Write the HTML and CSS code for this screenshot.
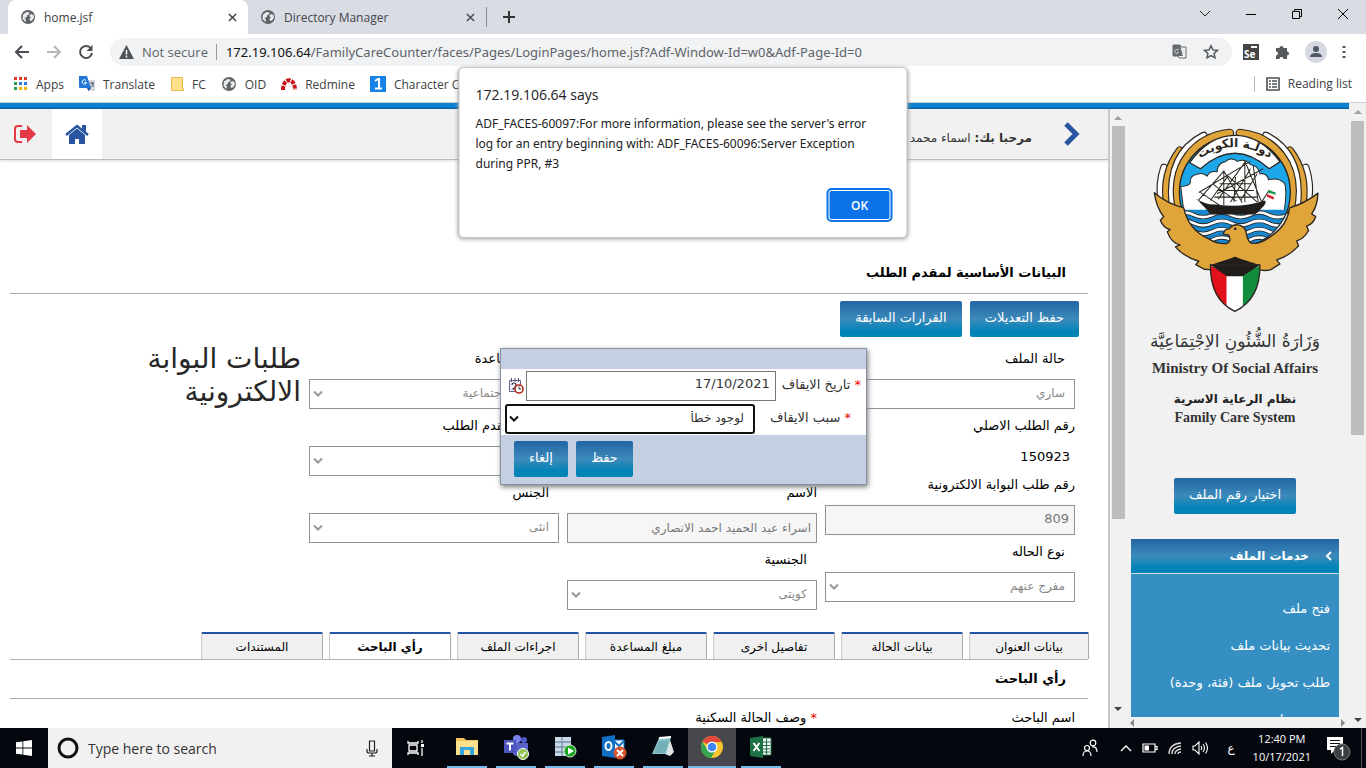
FILE: index.html
```html
<!DOCTYPE html>
<html lang="en">
<head>
<meta charset="utf-8">
<title>home.jsf</title>
<link rel="stylesheet" href="styles.css">
</head>
<body>
<svg class="defs" aria-hidden="true">
  <symbol id="globe" viewBox="0 0 16 16"><circle cx="8" cy="8" r="7" fill="#5f6368"/><path d="M3 5.500 6.500 3l3 .6L9 5.500 6.800 6.500 7 8 4.500 9 6 10.500 5.500 13 2.500 10ZM11 5l2.500 1 .5 2.500-2 3-2 .5-.5-2.500 1.500-1-2-1.500Z" fill="#e8eaed"/></symbol>
  <symbol id="chev" viewBox="0 0 10 8"><path d="m1 1.500 4 4 4-4" fill="none" stroke="currentColor" stroke-width="2"/></symbol>
  <symbol id="cross" viewBox="0 0 10 10"><path d="m1 1 8 8M9 1 1 9" stroke="currentColor" stroke-width="1.600"/></symbol>
</svg>

<header class="browser">
  <div class="tabstrip">
    <div class="btab active"><svg width="16" height="16"><use href="#globe"/></svg><span>home.jsf</span><button class="plain" aria-label="Close tab"><svg width="9" height="9"><use href="#cross"/></svg></button></div>
    <div class="btab"><svg width="16" height="16"><use href="#globe"/></svg><span>Directory Manager</span><button class="plain" aria-label="Close tab"><svg width="9" height="9"><use href="#cross"/></svg></button></div>
    <button class="plain newtab" aria-label="New tab"><svg width="12" height="12" viewBox="0 0 12 12"><path d="M6 0v12M0 6h12" stroke="#333" stroke-width="2"/></svg></button>
    <div class="winctl">
      <button class="plain" aria-label="Search tabs"><svg width="12" height="12" viewBox="0 0 12 12"><path d="m1 3 5 5 5-5" fill="none" stroke="#222"/></svg></button>
      <button class="plain" aria-label="Minimize"><svg width="12" height="12" viewBox="0 0 12 12"><path d="M1 6.500h10" stroke="#000"/></svg></button>
      <button class="plain" aria-label="Restore"><svg width="12" height="12" viewBox="0 0 12 12"><path d="M3.500 3.500v-2h7v7h-2M1.500 3.500h7v7h-7z" fill="none" stroke="#000"/></svg></button>
      <button class="plain" aria-label="Close"><svg width="12" height="12" viewBox="0 0 12 12"><path d="m1 1 10 10M11 1 1 11" stroke="#000"/></svg></button>
    </div>
  </div>
  <div class="toolbar">
    <button class="plain nav" aria-label="Back"><svg width="16" height="16" viewBox="0 0 16 16"><path d="M15 8H2M8 2 2 8l6 6" fill="none" stroke="#4a4d51" stroke-width="2"/></svg></button>
    <button class="plain nav" aria-label="Forward"><svg width="16" height="16" viewBox="0 0 16 16"><path d="M1 8h13M8 2l6 6-6 6" fill="none" stroke="#b4b6b9" stroke-width="2"/></svg></button>
    <button class="plain nav" aria-label="Reload"><svg width="16" height="16" viewBox="0 0 16 16"><path d="M13 4.500A6 6 0 1 0 14 9" fill="none" stroke="#4a4d51" stroke-width="2"/><path d="M14.500 1v6h-6z" fill="#4a4d51"/></svg></button>
    <div class="omnibox">
      <svg width="15" height="14" viewBox="0 0 15 14"><path d="M7.500 0 15 14H0z" fill="#4f5256"/><path d="M7.500 5v4.500M7.500 10.500v2" stroke="#fff" stroke-width="1.500"/></svg>
      <span class="secure">Not secure</span>
      <div class="url"><b>172.19.106.64</b>/FamilyCareCounter/faces/Pages/LoginPages/home.jsf?Adf-Window-Id=w0&amp;Adf-Page-Id=0</div>
      <svg width="15" height="15" viewBox="0 0 15 15"><path d="M1 1h7l1 2h5v11H7l-1-2H1z" fill="#f5f5f5" stroke="#66696e"/><path d="M1 1h7l3 11H1z" fill="#66696e"/><path d="M7 5.500H5a2 2 0 1 0 1.500 3V8H5M9 6h4M11 6c0 2 1 4 2.500 5M12.500 6c0 2-1 3-2.500 5" fill="none" stroke="#ddd" stroke-width=".8"/></svg>
      <svg width="16" height="16" viewBox="0 0 16 16"><path d="m8 1.800 1.900 4.100 4.500.5-3.300 3 .9 4.500L8 11.700l-4 2.200.9-4.500-3.300-3 4.500-.5z" fill="none" stroke="#55585c" stroke-width="1.500"/></svg>
    </div>
    <svg class="ext" width="16" height="16" viewBox="0 0 16 16"><path d="M0 0h16v16H0z" fill="#454545"/><path d="M8 2h6v2H8z" fill="#fff"/><text x="1" y="14" class="se">Se</text></svg>
    <svg class="ext" width="16" height="16" viewBox="0 0 16 16"><path d="M2 4h3.500a2 2 0 1 1 4 0H13v3.500a2 2 0 1 1 0 4V15H9.500a2 2 0 1 0-4 0H2v-3.500a2 2 0 1 0 0-4z" fill="#55585c"/></svg>
    <svg class="ext" width="22" height="22" viewBox="0 0 22 22"><circle cx="11" cy="11" r="11" fill="#d5d9df"/><circle cx="11" cy="8" r="3" fill="#4e5869"/><path d="M5 16q0-4 6-4t6 4z" fill="#4e5869"/></svg>
    <button class="plain" aria-label="Menu"><svg width="4" height="14" viewBox="0 0 4 14"><path d="M.5 1h3v2h-3zM.5 6h3v2h-3zM.5 11h3v2h-3z" fill="#505357"/></svg></button>
  </div>
  <nav class="bookmarks">
    <a href="#"><svg width="14" height="14" viewBox="0 0 14 14"><path d="M0 0h3v3H0zM5 0h3v3H5zM10 0h3v3h-3z" fill="#e33b2e"/><path d="M0 5h3v3H0zM0 10h3v3H0z" fill="#2b9a4a"/><path d="M5 5h3v3H5zM10 5h3v3h-3z" fill="#2b7de1"/><path d="M5 10h3v3H5zM10 10h3v3h-3z" fill="#f4b400"/></svg>Apps</a>
    <a href="#"><svg width="16" height="16" viewBox="0 0 16 16"><path d="M6 4h10v11H9z" fill="#d5d8dc"/><path d="M0 0h8l4 12H1q-1 0-1-1z" fill="#2478d8"/><path d="M8 12h4l-2.500 3z" fill="#174ea6"/><path d="M7 4.500a2.200 2.200 0 1 0 .5 2H5.500" fill="none" stroke="#fff"/><path d="M11 7h4M13 6v1c0 2 1 3 2 4m-.5-4c0 2-1 3-2.500 4" fill="none" stroke="#667"/></svg>Translate</a>
    <a href="#"><svg width="14" height="14" viewBox="0 0 14 14"><path d="M1.500.5h11V11l1 .5v2h-12z" fill="#ffe08a" stroke="#e8b84a"/></svg>FC</a>
    <a href="#"><svg width="16" height="16"><use href="#globe"/></svg>OID</a>
    <a href="#"><svg width="16" height="14" viewBox="0 0 16 14"><path d="M2 13C2 0 14 0 14 13" fill="none" stroke="#c8151b" stroke-width="4" stroke-dasharray="4 1"/></svg>Redmine</a>
    <a href="#"><svg width="16" height="16" viewBox="0 0 16 16"><path d="M0 0h16v16H0z" fill="#1683e8"/><path d="m5 5 3-2h1v9M5 12.500h7" fill="none" stroke="#fff" stroke-width="2"/></svg>Character Counter</a>
    <button class="plain reading"><svg width="14" height="14" viewBox="0 0 14 14"><path d="M1 1h12v12H1z" fill="none" stroke="#4b5054" stroke-width="1.600"/><path d="M3 4h2M3 7h2M3 10h2M6 4h5M6 7h5M6 10h5" stroke="#4b5054" stroke-width="1.400"/></svg>Reading list</button>
  </nav>
</header>

<div class="page" dir="rtl" lang="ar">
  <div class="vbar outer" aria-hidden="true"><i class="up"></i><i class="thumb"></i><i class="down"></i></div>
  <div class="app">
    <div class="topline"></div>
    <div class="cols">
      <aside class="side">
        <div class="sidecontent">
          <svg class="emblem" viewBox="165 80 500 560" role="img" aria-label="شعار دولة الكويت">
            <defs>
              <g id="wing" stroke-linecap="round" fill="none">
                <path d="M193 300Q185 250 201 202" stroke="#2b2722" stroke-width="24"/><path d="M193 300Q185 250 201 202" stroke="#fff" stroke-width="17"/>
                <path d="M210 310Q195 220 248 150" stroke="#2b2722" stroke-width="24"/><path d="M210 310Q195 220 248 150" stroke="#dfa43a" stroke-width="17"/>
                <path d="M226 310Q212 160 320 106" stroke="#2b2722" stroke-width="24"/><path d="M226 310Q212 160 320 106" stroke="#fff" stroke-width="17"/>
                <path d="M247 330C215 190 300 108 398 98" stroke="#2b2722" stroke-width="26"/><path d="M247 330C215 190 300 108 398 98" stroke="#dfa43a" stroke-width="19"/>
              </g>
              <path id="band" d="M300 180Q413 100 526 180"/>
              <clipPath id="disc"><circle cx="413" cy="275" r="164"/></clipPath>
            </defs>
            <use href="#wing"/><use href="#wing" transform="matrix(-1 0 0 1 826 0)"/>
            <circle cx="413" cy="275" r="166" fill="#1ea7e8" stroke="#2b2722" stroke-width="4"/>
            <path d="M251 258q25 0 29-12-2-22 20-24 17-8 30 5 8-17 30-13 0-26 26-31 15-14 35 0 22-10 38 9 25 4 29 28 22-3 26 18 30-8 48 11 8 20-1 82H260z" fill="#fff" stroke="#2b2722" stroke-width="3"/>
            <g clip-path="url(#disc)">
              <path d="M240 328H590V445H240z" fill="#1687cf"/>
              <g fill="none">
                <g stroke="#2b2722" stroke-width="13"><path d="M240 345q22-16 50-2t56 0 56 0 56 0 56 0 56 0"/><path d="M240 370q22-16 50-2t56 0 56 0 56 0 56 0 56 0"/><path d="M240 395q22-16 50-2t56 0 56 0 56 0 56 0 56 0"/><path d="M240 420q22-16 50-2t56 0 56 0 56 0 56 0 56 0"/></g>
                <g stroke="#fff" stroke-width="8"><path d="M240 345q22-16 50-2t56 0 56 0 56 0 56 0 56 0"/><path d="M240 370q22-16 50-2t56 0 56 0 56 0 56 0 56 0"/><path d="M240 395q22-16 50-2t56 0 56 0 56 0 56 0 56 0"/><path d="M240 420q22-16 50-2t56 0 56 0 56 0 56 0 56 0"/></g>
              </g>
            </g>
            <path d="M278 187 310 205Q413 112 516 205L548 184Q490 105 413 105T278 187z" fill="#fff" stroke="#2b2722" stroke-width="4"/>
            <text class="bandtext"><textPath href="#band" startOffset="50%" text-anchor="middle">دولـة الكويت</textPath></text>
            <path d="M297 294q28 20 60 18 75 12 145-12 10 6-10 24-7 12-20 18H340q-12-16-20-24z" fill="#211d1b"/>
            <g fill="none" stroke="#2b2722" stroke-width="3"><path d="m305 276 155-93M360 280l138-75M380 210v105M443 180v125M415 230l-5 75M468 195l15 110M380 212l-75 86M443 186l-80 110M380 212l55 95M443 182l50 122M310 276l60 40M348 252l70 50M390 225l90 80M340 300l50-70M400 305l60-100M430 300l50-80M352 290h130M360 270h110M368 250h95"/><path d="m490 310 25-40"/></g>
            <path d="m513 268 22 8v7l-23-7z" fill="#159447"/><path d="m511 281 20 10-3 6-20-9z" fill="#dc1f26"/>
            <path d="M172 277Q210 310 260 322 274 388 335 415 362 432 388 429q16-5 7-25l-17-3q4-17 18-16 9-14 28-12 22 5 24 28 2 18 14 27 27 5 65-25 43-30 50-81 47-14 85-44-2 40-19 62l12 8q-6 22-27 29l6 13q-15 26-36 31l6 15q-29 31-66 42l10 12-27 17q-16 5-32 1L413 470l-66 38-26-2-25-14 9-10q-44-13-70-43l14-6q-27-6-38-39l8-7q-21-6-29-28l10-10Q178 320 172 277z" fill="#dfa43a" stroke="#2b2722" stroke-width="4" stroke-linejoin="round"/>
            <circle cx="414" cy="385" r="4" fill="#2b2722"/>
            <path d="M340 493h148Q490 595 413 632 338 595 340 493z" fill="#fff"/><path d="M340 495 388 520V617Q340 585 340 495z" fill="#e2111c"/><path d="M488 495 437 520V617Q488 580 488 495z" fill="#128c3c"/><path d="m340 493 73-24 75 24-52 34h-47z" fill="#211d1b"/><path d="M340 493h148Q490 595 413 632 338 595 340 493z" fill="none" stroke="#2b2722" stroke-width="4"/>
          </svg>
          <div class="ministry">وَزَارَةُ الشُّئُونِ الاِجْتِمَاعِيَّة</div>
          <div class="serif big" lang="en" dir="ltr">Ministry Of Social Affairs</div>
          <div class="sysar">نظام الرعاية الاسرية</div>
          <div class="serif" lang="en" dir="ltr">Family Care System</div>
          <button class="btn pick">اختيار رقم الملف</button>
          <nav class="services">
            <h2><svg width="7" height="10" viewBox="0 0 7 10"><path d="M6 1 2 5l4 4" fill="none" stroke="#fff" stroke-width="2"/></svg>خدمات الملف</h2>
            <a href="#">فتح ملف</a>
            <a href="#">تحديث بيانات ملف</a>
            <a href="#">طلب تحويل ملف (فئة، وحدة)</a>
            <a href="#">تحديث ملف سرية</a>
          </nav>
          <div class="hbar" aria-hidden="true"><i class="right"></i><i class="left"></i></div>
        </div>
        <div class="vbar inner" aria-hidden="true"><i class="up"></i><i class="thumb"></i><i class="down"></i></div>
      </aside>
      <main class="main">
        <div class="userbar">
          <svg width="16" height="24" viewBox="0 0 16 24"><path d="m2 2 10 10L2 22" fill="none" stroke="#2854a0" stroke-width="5"/></svg>
          <span class="user"><b>مرحبا بك:</b> اسماء محمد علي</span>
          <a href="#" class="home" aria-label="الرئيسية"><svg width="24" height="20" viewBox="0 0 24 20"><path d="m1 11 11-9 11 9" fill="none" stroke="#2854a0" stroke-width="2.500"/><path d="M17 1h4v7l-4-3zM4 11l8-6.500 8 6.500v9h-6v-5h-4v5H4z" fill="#2854a0"/></svg></a>
          <a href="#" class="logout" aria-label="خروج"><svg width="22" height="20" viewBox="0 0 22 20"><path d="M8 2H4Q1 2 1 5v10q0 3 3 3h4" fill="none" stroke="#e63946" stroke-width="2"/><path d="M6 6h7V1l9 9-9 9v-5H6z" fill="#e63946"/></svg></a>
        </div>
        <div class="content">
          <h1 class="section first">البيانات الأساسية لمقدم الطلب</h1>
          <div class="actions"><button class="btn">حفظ التعديلات</button><button class="btn">القرارات السابقة</button></div>
          <div class="form fields">
            <div class="col">
              <label for="f1" class="in">حالة الملف</label><div class="sel"><select id="f1" disabled><option>ساري</option></select><svg width="10" height="8"><use href="#chev"/></svg></div>
              <label for="f2">رقم الطلب الاصلي</label><output id="f2">150923</output>
              <label for="f3">رقم طلب البوابة الالكترونية</label><input id="f3" value="809" class="num" disabled>
              <label for="f4" class="in">نوع الحاله</label><div class="sel"><select id="f4" disabled><option>مفرج عنهم</option></select><svg width="10" height="8"><use href="#chev"/></svg></div>
            </div>
            <div class="col end">
              <label for="f5">الاسم</label><input id="f5" value="اسراء عبد الحميد احمد الانصاري" disabled>
              <label for="f6" class="in">الجنسية</label><div class="sel"><select id="f6" disabled><option>كويتى</option></select><svg width="10" height="8"><use href="#chev"/></svg></div>
            </div>
            <div class="col">
              <label for="f7" class="in">نوع المساعدة</label><div class="sel"><select id="f7" disabled><option>مساعدة اجتماعية</option></select><svg width="10" height="8"><use href="#chev"/></svg></div>
              <label for="f8" class="in">جنسية مقدم الطلب</label><div class="sel"><select id="f8" disabled><option></option></select><svg width="10" height="8"><use href="#chev"/></svg></div>
              <label for="f9" class="in">الجنس</label><div class="sel"><select id="f9" disabled><option>انثى</option></select><svg width="10" height="8"><use href="#chev"/></svg></div>
            </div>
            <div class="portal">طلبات البوابة الالكترونية</div>
          </div>
          <div class="tabs" role="tablist">
            <button role="tab">بيانات العنوان</button><button role="tab">بيانات الحالة</button><button role="tab">تفاصيل اخرى</button><button role="tab">مبلغ المساعدة</button><button role="tab">اجراءات الملف</button><button role="tab" aria-selected="true" class="on">رأي الباحث</button><button role="tab">المستندات</button>
          </div>
          <h2 class="section">رأي الباحث</h2>
          <div class="form tail"><div class="col">اسم الباحث</div><div class="col"><span><b class="req">*</b> وصف الحالة السكنية</span></div></div>
        </div>
      </main>
    </div>
  </div>
  <form class="popup">
    <div class="prow"><label for="d"><b class="req">*</b> تاريخ الايقاف</label><input id="d" class="num" value="17/10/2021"><svg width="16" height="16" viewBox="0 0 16 16"><path d="M1.500 2.500h11v11h-11z" fill="#f2f2fb" stroke="#62628c"/><path d="M3.500 0v4M7 0v4M10.500 0v4" stroke="#555580"/><path d="M4 7q0-2 2-2t2 2-3 4h3" fill="none" stroke="#333" stroke-width="1.200"/><circle cx="11" cy="11" r="4" fill="#fff" stroke="#b52a1c" stroke-width="1.600"/><path d="M11 8.500V11h2" fill="none" stroke="#333"/></svg></div>
    <div class="prow second"><label for="r"><b class="req">*</b> سبب الايقاف</label><div class="sel focus"><select id="r"><option>لوجود خطأ</option></select><svg width="10" height="8"><use href="#chev"/></svg></div></div>
    <div class="pfoot"><button type="button" class="btn">حفظ</button><button type="button" class="btn">إلغاء</button></div>
  </form>
</div>

<footer class="taskbar">
  <button class="plain start" aria-label="Start"><svg width="16" height="16" viewBox="0 0 16 16"><path d="M0 2.300 6.500 1.400v6.200H0zM7.300 1.200 16 0v7.600H7.300zM0 8.400h6.500v6.200L0 13.700zM7.300 8.400H16V16l-8.700-1.200z" fill="#fff"/></svg></button>
  <div class="search"><svg width="22" height="22" viewBox="0 0 22 22"><circle cx="11" cy="11" r="9" fill="none" stroke="#111" stroke-width="3"/></svg><input aria-label="Search" placeholder="Type here to search"><svg width="12" height="17" viewBox="0 0 12 17"><path d="M3.500 1h5v10h-5zM1 9v2q0 2 2 2h6q2 0 2-2V9M6 13v3M3 16h6" fill="none" stroke="#222" stroke-width="1.200"/></svg></div>
  <button class="plain task view" aria-label="Task view"><svg width="18" height="16" viewBox="0 0 18 16"><path d="M1 1v2h10V1M1 15v-2h10v2M2 5h8v6H2zM15 0v3M15 8v8" fill="none" stroke="#fff" stroke-width="1.300"/><path d="M14 4h3v3h-3z" fill="#fff"/></svg></button>
  <div class="tasks">
    <button class="plain task" aria-label="File Explorer"><svg width="24" height="24" viewBox="0 0 24 24"><path d="M1 3h8l2 2h12v15H1z" fill="#f0c85c"/><path d="M1 6h22v14H1z" fill="#fbe08e"/><path d="M5 12h14v8h-4v-5H9v5H5z" fill="#36a3dc"/></svg></button>
    <button class="plain task" aria-label="Teams"><svg width="26" height="26" viewBox="0 0 26 26"><circle cx="14" cy="5" r="4" fill="#7b83eb"/><circle cx="21" cy="6" r="3" fill="#5059c9"/><path d="M9 9h9v11q-7 5-9-3zM18 9h7v7q0 5-7 5z" fill="#5c62c8"/><path d="M1 6h12v13H1z" fill="#4b53bc"/><path d="M3.500 9.500h7M7 9.500v7" stroke="#fff" stroke-width="2"/><circle cx="20" cy="20" r="5.500" fill="#92c353" stroke="#fff"/><path d="m17.500 20 2 2 3-4" fill="none" stroke="#fff" stroke-width="1.500"/></svg></button>
    <button class="plain task" aria-label="Database server"><svg width="24" height="24" viewBox="0 0 24 24"><path d="M2 2h16v19H2z" fill="#c9d9e6"/><path d="M2 7h16M2 12h16M2 17h16M9 2v19" stroke="#7790aa" stroke-width="1.300"/><circle cx="17" cy="16" r="6" fill="#19a51d" stroke="#d9f0d9"/><path d="m15 12.500 6 3.500-6 3.500z" fill="#fff"/></svg></button>
    <button class="plain task" aria-label="Outlook"><svg width="26" height="26" viewBox="0 0 26 26"><path d="M13 6h10v12H13z" fill="#fff" stroke="#0f73c6"/><path d="m13 7 5 5 5-5" fill="none" stroke="#0f73c6" stroke-width="2"/><path d="m1 3 13-2v23L1 22z" fill="#0f6fc5"/><ellipse cx="7.500" cy="12" rx="3" ry="4" fill="none" stroke="#fff" stroke-width="2"/><circle cx="19" cy="19" r="6.500" fill="#d9532f"/><path d="m16 16 6 6m0-6-6 6" stroke="#fff" stroke-width="2"/></svg></button>
    <button class="plain task" aria-label="Notepad"><svg width="24" height="24" viewBox="0 0 24 24"><path d="m18 2 5 15-4 4-5-2z" fill="#dfe4e4"/><path d="m8 3 12-1-5 17H1z" fill="#8ec5cd"/><path d="m8 6 10-1-4 13H3z" fill="#5a99a6" opacity=".5"/><path d="m8 3 12-1" stroke="#fff" stroke-width="2"/></svg></button>
    <button class="plain task current" aria-label="Chrome"><svg width="24" height="24" viewBox="0 0 24 24"><circle cx="12" cy="12" r="11" fill="#f7c52d"/><path d="M12 12 2.500 6.500A11 11 0 0 1 21.500 6.500L21 7H12z" fill="#e2483b"/><path d="M2.500 6.500A11 11 0 0 0 11 23l5-8.500L7.500 15z" fill="#35a552"/><circle cx="12" cy="12" r="5.500" fill="#fff"/><circle cx="12" cy="12" r="4.300" fill="#4285f4"/></svg></button>
    <button class="plain task" aria-label="Excel"><svg width="24" height="24" viewBox="0 0 24 24"><path d="M13 3h9v17h-9z" fill="#fff" stroke="#1d7044"/><path d="M14 7h7M14 10.500h7M14 14h7M14 17h7M17.500 4v15" stroke="#1d7044" stroke-width="1.200"/><path d="m1 3 13-2v22L1 21z" fill="#1d7044"/><path d="m4.500 8 6 8m0-8-6 8" stroke="#fff" stroke-width="2"/></svg></button>
  </div>
  <div class="tray">
    <svg width="16" height="18" viewBox="0 0 16 18"><g fill="none" stroke="#fff" stroke-width="1.200"><circle cx="11" cy="4" r="2.800"/><circle cx="5" cy="9" r="2.500"/><path d="M1 17q0-5 4-5t4 5M10 8q5-1 5 5"/></g></svg>
    <svg width="12" height="8" viewBox="0 0 12 8"><path d="m1 7 5-5 5 5" fill="none" stroke="#fff" stroke-width="1.300"/></svg>
    <svg width="16" height="10" viewBox="0 0 16 10"><path d="M1 1h12v8H1zM13 3.500h2v3h-2" fill="none" stroke="#fff" stroke-width="1.200"/><path d="M2.500 2.500H7v5H2.500z" fill="#fff"/></svg>
    <svg width="14" height="14" viewBox="0 0 14 14"><g fill="none" stroke="#ddd" stroke-width="1.300"><path d="M1 13Q1 3 13 2M4 13q0-7 9-8M7 13q0-4 6-5M10 13q0-2 3-2"/></g></svg>
    <svg width="17" height="14" viewBox="0 0 17 14"><path d="M1 5h2l4-4v12L3 9H1zM9 5q1.500 2 0 4M11 3q3 4 0 8M13.500 1.500q4 5.500 0 11" fill="none" stroke="#fff" stroke-width="1.100"/></svg>
    <span class="lang" lang="ar">ع</span>
    <div class="clock"><span>12:40 PM</span><span>10/17/2021</span></div>
    <svg width="24" height="26" viewBox="0 0 24 26"><path d="M0 2h16v13H8l-4 4v-4H0z" fill="#fff"/><path d="M3 5.500h10M3 8.500h10M3 11.500h10" stroke="#111"/><circle cx="15" cy="17" r="8" fill="#3b3f42" stroke="#777"/><path d="m13 14 2.500-1.500V21" fill="none" stroke="#fff" stroke-width="1.500"/></svg>
    <i class="desk"></i>
  </div>
</footer>

<section class="dialog" role="alertdialog" aria-labelledby="dt">
  <h2 id="dt">172.19.106.64 says</h2>
  <p>ADF_FACES-60097:For more information, please see the server's error log for an entry beginning with: ADF_FACES-60096:Server Exception during PPR, #3</p>
  <button class="ok">OK</button>
</section>
</body>
</html>
```
FILE: styles.css
```css
* { box-sizing: border-box; }
body { margin: 0; height: 100vh; display: flex; flex-direction: column; overflow: hidden; position: relative; background: #fff; font-family: "Open Sans", sans-serif; font-size: 12px; color: #222; }
svg { display: block; flex: none; }
button, input, select { font: inherit; color: inherit; margin: 0; }
h1, h2, p { margin: 0; }
a { color: inherit; text-decoration: none; }
.defs { position: absolute; width: 0; height: 0; }
.plain { background: none; border: 0; padding: 0; display: flex; align-items: center; justify-content: center; }

/* browser frame */
.browser { flex: none; height: 103px; border-bottom: 1px solid #cfd0d2; background: #fff; }
.tabstrip { height: 34px; display: flex; align-items: center; background: #d9dce3; padding-left: 8px; }
.btab { width: 239px; height: 34px; padding: 0 11px 0 12px; display: flex; align-items: center; gap: 8px; color: #44474b; }
.btab span { flex: 1; }
.btab.active { width: 240px; background: #fff; border-radius: 8px 8px 0 0; color: #3c4043; }
.btab:not(.active) { border-right: 1px solid #888b91; height: 20px; }
.newtab { margin-left: 16px; }
.winctl { margin-left: auto; display: flex; align-items: center; gap: 34px; padding: 0 17px 6px 0; }
.toolbar { height: 35px; display: flex; align-items: center; padding: 0 20px 0 14px; }
.nav { margin-right: 16px; }
.omnibox { flex: 1; min-width: 0; height: 28px; border-radius: 14px; background: #f0f2f4; display: flex; align-items: center; padding: 0 13px 0 9px; margin-right: 11px; gap: 16px; font-size: 13px; color: #5f6368; white-space: nowrap; }
.secure { border-right: 1px solid #999; padding-right: 8px; margin: 0 -7px 0 -8px; line-height: 16px; }
.url { flex: 1; min-width: 0; overflow: hidden; font-family: "Noto Sans", sans-serif; }
.url b { font-weight: 400; color: #111; }
.ext { margin-right: 15px; }
.se { font: bold 10px "Open Sans", sans-serif; fill: #fff; }
.bookmarks { height: 30px; display: flex; align-items: center; padding: 0 14px; gap: 15px; color: #3c4043; }
.bookmarks a { display: flex; align-items: center; gap: 8px; }
.reading { margin-left: auto; gap: 8px; border-left: 1px solid #bbb; padding-left: 11px; line-height: 16px; }

/* application */
.page { flex: 1; min-height: 0; display: flex; position: relative; overflow: hidden; font-family: "DejaVu Sans", sans-serif; }
.app { flex: 1; min-width: 0; display: flex; flex-direction: column; }
.topline { height: 6px; flex: none; background: linear-gradient(#0a82d2 60%, #075a98); }
.cols { flex: 1; min-height: 0; display: flex; }
.side { width: 241px; display: flex; background: #f1f1f1; border-left: 2px solid #cacaca; overflow: hidden; }
.sidecontent { flex: 1; min-width: 0; display: flex; flex-direction: column; align-items: center; padding: 18px 10px 0 5px; position: relative; }
.emblem { width: 167px; height: 187px; }
.bandtext { font: bold 36px "DejaVu Sans", sans-serif; fill: #2b2722; }
.ministry { font: 17px "DejaVu Sans", sans-serif; line-height: 34px; margin-top: 10px; height: 34px; white-space: nowrap; color: #333; }
.serif { font: bold 14px "Liberation Serif", serif; line-height: 18px; color: #333; white-space: nowrap; }
.serif.big { font-size: 15px; line-height: 18px; margin-top: 1px; }
.sysar { font-weight: bold; font-size: 12px; line-height: 20px; margin-top: 12px; }
.btn { height: 36px; border: 0; border-radius: 2px; padding: 0 15px 4px; color: #fff; font-size: 13px; background: linear-gradient(#2365a3, #3c8abb 50%, #0083b7 85%); white-space: nowrap; }
.pick { margin-top: 51px; flex: none; min-width: 121px; }
.services { align-self: stretch; margin-top: 25px; background: #358fc2; color: #fff; flex: 1; min-height: 0; overflow: hidden; margin-bottom: 11px; display: flex; flex-direction: column; }
.services h2 { flex: none; font-size: 12px; line-height: 34px; height: 35px; padding: 0 7px; display: flex; align-items: center; gap: 16px; border-bottom: 1px solid #c9dbe0; margin-bottom: 16px; background: linear-gradient(#2365a3, #3c8abb 50%, #0083b7 85%); }
.services a { flex: none; font-size: 13px; line-height: 37px; padding: 0 9px; white-space: nowrap; }
.vbar { flex: none; display: flex; flex-direction: column; align-items: center; background: #f1f1f1; }
.vbar i, .hbar i { display: block; border: 4px solid transparent; }
.vbar .up { border-bottom-color: #a0a0a0; border-top: 0; margin: 7px 0; }
.vbar .down { border-top-color: #444; border-bottom: 0; margin: auto 0 6px; }
.vbar .thumb { border: 0; width: 13px; background: #bdbdbd; }
.outer { width: 17px; }
.outer .thumb { flex: 0 0 314px; }
.inner { width: 16px; }
.inner .up { margin: 7px 0 6px; }
.inner .thumb { flex: 0 0 393px; }
.inner .down { margin-bottom: 17px; }
.hbar { position: absolute; left: 4px; right: 4px; bottom: 0; height: 11px; display: flex; justify-content: space-between; align-items: center; }
.hbar .right { border-left-color: #888; border-right: 0; }
.hbar .left { border-right-color: #888; border-left: 0; }

.main { flex: 1; min-width: 0; display: flex; flex-direction: column; overflow: hidden; }
.userbar { flex: none; height: 51px; display: flex; align-items: center; background: #f1f1f1; border-bottom: 1px solid #bbb; box-shadow: 0 1px 3px #ddd; padding-right: 28px; }
.user { margin-right: 32px; flex: 1; color: #333; padding-top: 8px; }
.home { width: 50px; height: 50px; background: #fff; display: grid; place-items: center; }
.logout { width: 52px; padding-right: 16px; }
.content { padding: 0 20px 0 10px; color: #000; }
.section { font-size: 13px; line-height: 38px; height: 39px; padding-right: 22px; border-bottom: 1px solid #a6a9b0; }
.first { margin-top: 94px; height: 40px; }
.actions { display: flex; gap: 8px; padding: 7px 9px 5px; }
.form { display: flex; gap: 8px; padding-right: 13px; align-items: stretch; }
.fields { min-height: 268px; }
.col { flex: 0 1 250px; min-width: 0; display: flex; flex-direction: column; }
.col.end { justify-content: flex-end; }
.col label { line-height: 33px; height: 37px; font-size: 13px; flex: none; white-space: nowrap; }
.col label.in { padding-right: 10px; }
.col input { height: 30px; padding: 0 5px; border: 1px solid #8d958d; background: #f6f6f6; color: #777; width: 100%; }
.col .num, .popup .num { direction: ltr; text-align: right; font-size: 13px; padding-bottom: 4px; }
.col output { height: 22px; line-height: 22px; font-size: 13px; padding-right: 5px; }
.sel { display: grid; height: 30px; align-items: center; color: #999; }
.sel > * { grid-area: 1 / 1; }
.sel select { appearance: none; width: 100%; height: 30px; border: 1px solid #8d958d; border-radius: 0; background: #fff; color: #888; opacity: 1; padding: 0 9px 2px; }
.sel svg { justify-self: end; margin-left: 4px; color: #999; }
.portal { font-size: 28px; line-height: 33px; flex: 0 1 190px; color: #282828; }
.tabs { display: flex; gap: 8px; margin: 22px 0 0; border-bottom: 1px solid #b4b4b4; height: 28px; }
.tabs button { width: 120px; height: 27px; flex: none; padding: 0; border: 0; border-top: 2px solid #2553a4; background: #f0f0f0; font-size: 12px; box-shadow: 1px 0 #aaa, -1px 0 #ccc; }
.tabs button:first-child { width: 118px; }
.tabs .on { background: #fff; font-weight: bold; }
.tail { line-height: 38px; white-space: nowrap; font-size: 13px; }
.req { color: #e00; font-weight: 400; }

.popup { position: absolute; left: 500px; top: 245px; width: 367px; border: 1px solid #75829a; background: #fff; box-shadow: 1px 2px 5px #777; border-top: 21px solid #c4cfe2; outline: 1px solid #8793a4; outline-offset: -1px; }
.prow { display: flex; align-items: center; height: 33px; padding-right: 5px; gap: 6px; color: #333; }
.prow label { white-space: nowrap; padding-bottom: 3px; font-size: 13px; }
.prow svg { margin-right: -4px; }
.prow > input { width: 250px; height: 30px; border: 1px solid #777; padding: 0 5px; }
.second { padding-right: 15px; }
.second label { min-width: 90px; }
.focus { width: 250px; }
.focus select { border: 2px solid #101010; border-radius: 3px; color: #333; }
.focus svg { color: #111; }
.pfoot { background: #c4cfe2; padding: 6px 0 7px 13px; display: flex; gap: 8px; justify-content: flex-end; }

/* alert */
.dialog { position: absolute; left: 50%; top: 67px; width: 449px; height: 171px; transform: translateX(-50%); background: #fff; border: 1px solid #c5c5c5; border-radius: 5px; box-shadow: 0 1px 4px #999; padding: 17px 16px; color: #202124; display: flex; flex-direction: column; }
.dialog h2 { font-size: 14px; font-weight: 400; line-height: 20px; margin-bottom: 9px; }
.dialog p { line-height: 20px; font-size: 12px; font-family: "Noto Sans", sans-serif; padding-right: 12px; }
.ok { align-self: flex-end; margin-top: auto; width: 62px; height: 30px; border: 1px solid #fff; border-radius: 3px; background: #0b72e8; color: #fff; font-weight: 600; outline: 2px solid #0b72e8; }

/* taskbar */
.taskbar { flex: none; height: 40px; background: #04070e; display: flex; align-items: stretch; color: #fff; position: relative; }
.start { width: 48px; }
.search { width: 344px; background: #f1f1f1; color: #333; display: flex; align-items: center; padding: 0 14px 0 9px; gap: 9px; }
.search input { flex: 1; min-width: 0; border: 0; background: none; font-size: 14px; padding: 0; }
.search input::placeholder { color: #333; }
.view { width: 48px; }
.tasks { display: flex; gap: 9px; padding-left: 7px; }
.tasks .task { width: 40px; border-bottom: 2px solid #76b9ed; }
.tasks .current { width: 48px; margin: 0 -4px; background: #46484c; }
.tray { margin-left: auto; display: flex; align-items: center; gap: 10px; }
.tray svg:first-child { margin-right: 12px; }
.lang { margin: 0 8px; font-family: "DejaVu Sans", sans-serif; }
.clock { display: flex; flex-direction: column; align-items: center; line-height: 18px; font-size: 11px; }
.clock + svg { margin-left: 6px; }
.desk { width: 5px; align-self: stretch; border-left: 1px solid #555; }
```
